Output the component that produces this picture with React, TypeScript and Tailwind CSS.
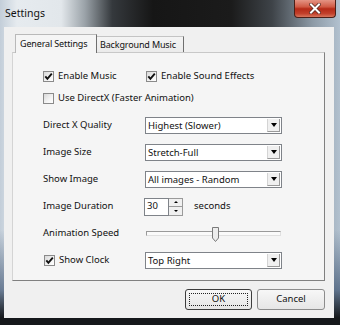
import React from "react";

function Check({ checked }: { checked: boolean }) {
  return (
    <div className="w-[11px] h-[11px] shrink-0 border border-[#8a8a8a] bg-[linear-gradient(135deg,#d8d8d8,#f4f4f4_60%,#ffffff)] flex items-center justify-center">
      {checked && (
        <svg width="9" height="9" viewBox="0 0 9 9">
          <path d="M1.3 4.3 L3.4 6.8 L7.8 1.6" fill="none" stroke="#111" strokeWidth="1.9" />
        </svg>
      )}
    </div>
  );
}

function Combo({ value }: { value: string }) {
  return (
    <div className="w-[137px] h-[17px] border border-[#7f8389] bg-white flex items-stretch">
      <div className="flex-1 pl-[2px] flex items-center leading-none text-[#111] whitespace-nowrap">{value}</div>
      <div className="w-[13px] my-[1px] mr-[1px] border-l border-[#d4d4d4] border-b border-b-[#9a9a9a] border-r border-r-[#9a9a9a] bg-[#f0f0f0] flex items-center justify-center">
        <div className="w-0 h-0 border-l-[3.5px] border-r-[3.5px] border-t-[4px] border-l-transparent border-r-transparent border-t-black" />
      </div>
    </div>
  );
}

function Row({ label, children }: { label: React.ReactNode; children: React.ReactNode }) {
  return (
    <div className="h-[17px] flex items-center">
      <div className="w-[102px] shrink-0 flex items-center whitespace-nowrap">{label}</div>
      {children}
    </div>
  );
}

export default function App() {
  return (
    <div className="w-[340px] h-[325px] flex flex-col overflow-hidden font-['Noto_Sans',sans-serif] text-[9.5px] text-[#111] whitespace-nowrap bg-[linear-gradient(to_bottom,rgba(0,0,0,0)_0px,rgba(0,0,0,0)_230px,rgba(30,55,90,0.55)_290px,#15181b_318px),linear-gradient(to_right,#c3ced9_0%,#e6ebef_5%,#e2e7eb_18%,#9aa2a8_25%,#35393d_33%,#161616_45%,#1b1b1b_68%,#3e4348_80%,#8d9aa6_92%,#b2c1cf_100%)]">
      {/* Title bar */}
      <div className="h-[27px] shrink-0 flex items-start">
        <div className="pl-[5px] pt-[4px] text-[10.5px] text-[#111] leading-[18px]">Settings</div>
        <div className="flex-1" />
        <div className="mr-[4px] w-[42px] h-[18px] rounded-b-[4px] border border-t-0 border-[#4b1f18] bg-[linear-gradient(to_bottom,#e49484_0%,#d05a45_40%,#b52a17_52%,#c2402b_80%,#d8755c_100%)] flex items-center justify-center">
          <svg width="12" height="11" viewBox="0 0 12 11">
            <path d="M2 1.5 L10 9.5 M10 1.5 L2 9.5" stroke="#5a2a22" strokeWidth="3.6" strokeLinecap="square" />
            <path d="M2 1.5 L10 9.5 M10 1.5 L2 9.5" stroke="#ffffff" strokeWidth="2" strokeLinecap="square" />
          </svg>
        </div>
      </div>

      {/* Middle */}
      <div className="flex flex-1">
        <div className="w-[4px] shrink-0" />
        <div className="w-[330px] h-[291px] bg-[#f0f0f0] pl-[8px] pr-[9px] pt-[6px] flex flex-col">
          {/* Tabs */}
          <div className="h-[19px] flex items-end pl-[3px] relative z-10 text-[9px] tracking-[-0.15px]">
            <div className="w-[82px] h-[19px] -mb-px bg-[#f5f5f5] border border-b-0 border-l-[#b9b9b9] border-t-[#b9b9b9] border-r-[#6f6f6f] flex items-center pl-[4px]">
              General Settings
            </div>
            <div className="w-[87px] h-[16px] bg-[linear-gradient(#f4f4f4,#ebebeb)] border border-b-0 border-l-0 border-t-[#c4c4c4] border-r-[#6f6f6f] flex items-center pl-[3px]">
              Background Music
            </div>
          </div>
          {/* Panel */}
          <div className="h-[229px] bg-[#f5f5f5] border border-t-[#c8c8c8] border-l-[#d4d4d4] border-r-[#808080] border-b-[#808080] pl-[30px] pt-[15px] flex flex-col">
            <div className="h-[16px] flex items-center">
              <div className="w-[103px] flex items-center gap-[4px]">
                <Check checked />
                <span>Enable Music</span>
              </div>
              <div className="flex items-center gap-[4px]">
                <Check checked />
                <span>Enable Sound Effects</span>
              </div>
            </div>
            <div className="h-[16px] mt-[6px] flex items-center gap-[4px]">
              <Check checked={false} />
              <span>Use DirectX (Faster Animation)</span>
            </div>
            <div className="mt-[11px] flex flex-col gap-[10px]">
              <Row label="Direct X Quality">
                <Combo value="Highest (Slower)" />
              </Row>
              <Row label="Image Size">
                <Combo value="Stretch-Full" />
              </Row>
              <Row label="Show Image">
                <Combo value="All images - Random" />
              </Row>
              <Row label="Image Duration">
                <div className="flex items-center -ml-px">
                  <div className="w-[25px] h-[18px] border border-[#7f8389] bg-white flex items-center pl-[2px]">30</div>
                  <div className="w-[14px] h-[18px] flex flex-col">
                    <div className="flex-1 border border-l-0 border-[#9a9a9a] bg-[#f0f0f0] flex items-center justify-center">
                      <div className="w-0 h-0 border-l-[2px] border-r-[2px] border-b-[2px] border-l-transparent border-r-transparent border-b-black" />
                    </div>
                    <div className="flex-1 border border-l-0 border-t-0 border-[#9a9a9a] bg-[#f0f0f0] flex items-center justify-center">
                      <div className="w-0 h-0 border-l-[2px] border-r-[2px] border-t-[2px] border-l-transparent border-r-transparent border-t-black" />
                    </div>
                  </div>
                  <span className="ml-[11px]">seconds</span>
                </div>
              </Row>
              <Row label="Animation Speed">
                <div className="relative w-[136px] h-[17px]">
                  <div className="absolute left-[1px] right-0 top-[6px] h-[5px] border border-t-[#9a9a9a] border-l-[#9a9a9a] border-r-[#e0e0e0] border-b-[#e0e0e0] bg-[#fafafa]" />
                  <svg className="absolute left-[67px] top-[2px]" width="7" height="15" viewBox="0 0 7 15">
                    <path d="M0.5 0.5 H6.5 V11 L3.5 14.5 L0.5 11 Z" fill="#ececec" stroke="#7a7a7a" />
                  </svg>
                </div>
              </Row>
              <Row
                label={
                  <div className="flex items-center gap-[4px] pl-[1px]">
                    <Check checked />
                    <span>Show Clock</span>
                  </div>
                }
              >
                <Combo value="Top Right" />
              </Row>
            </div>
          </div>
          {/* Buttons */}
          <div className="mt-[8px] flex justify-end gap-[5px]">
            <div className="relative w-[67px] h-[21px] rounded-[3px] border border-[#3d3d3d] bg-[linear-gradient(#f7f7f7,#e6e6e6)] flex items-center justify-center">
              <div className="absolute inset-[3px] border border-dotted border-[#222]" />
              OK
            </div>
            <div className="w-[68px] h-[21px] rounded-[3px] border border-[#8c8c8c] bg-[linear-gradient(#f7f7f7,#e6e6e6)] flex items-center justify-center">
              Cancel
            </div>
          </div>
        </div>
        <div className="flex-1" />
      </div>
      <div className="h-[7px] shrink-0 bg-[#15181b]" />
    </div>
  );
}
